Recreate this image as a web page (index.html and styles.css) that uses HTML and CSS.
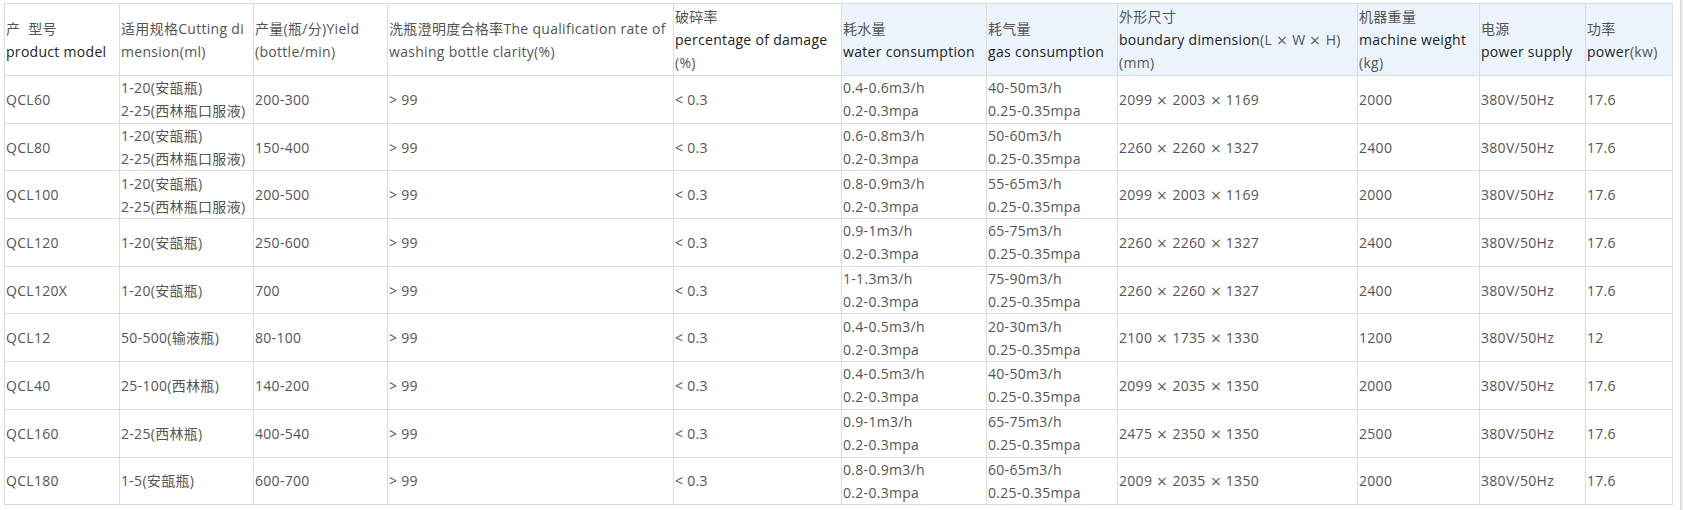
FILE: index.html
```html
<!DOCTYPE html>
<html lang="zh">
<head>
<meta charset="utf-8">
<title>QCL</title>
<link rel="stylesheet" href="styles.css">
</head>
<body>
<div class="page">
  <div class="content">
    <table class="spec">
      <colgroup>
        <col class="c1"><col class="c2"><col class="c3"><col class="c4"><col class="c5"><col class="c6"><col class="c7"><col class="c8"><col class="c9"><col class="c10"><col class="c11">
      </colgroup>
      <thead>
        <tr>
          <th>产&nbsp; 型号<br><span class="en">product model</span></th>
          <th>适用规格Cutting di<br>mension(ml)</th>
          <th>产量(瓶/分)Yield<br>(bottle/min)</th>
          <th>洗瓶澄明度合格率The qualification rate of<br>washing bottle clarity(%)</th>
          <th>破碎率<br><span class="en">percentage of damage</span><br>(%)</th>
          <th class="blue">耗水量<br><span class="en">water consumption</span></th>
          <th class="blue">耗气量<br><span class="en">gas consumption</span></th>
          <th class="blue">外形尺寸<br><span class="en">boundary dimension</span>(L <span class="x">×</span> W <span class="x">×</span> H)<br>(mm)</th>
          <th class="blue">机器重量<br><span class="en">machine weight</span><br>(kg)</th>
          <th class="blue">电源<br><span class="en">power supply</span></th>
          <th class="blue">功率<br><span class="en">power</span>(kw)</th>
        </tr>
      </thead>
      <tbody>
        <tr><td>QCL60</td><td>1-20(安瓿瓶)<br>2-25(西林瓶口服液)</td><td>200-300</td><td>&gt; 99</td><td>&lt; 0.3</td><td>0.4-0.6m3/h<br>0.2-0.3mpa</td><td>40-50m3/h<br>0.25-0.35mpa</td><td>2099 <span class="x">×</span> 2003 <span class="x">×</span> 1169</td><td>2000</td><td>380V/50Hz</td><td>17.6</td></tr>
        <tr><td>QCL80</td><td>1-20(安瓿瓶)<br>2-25(西林瓶口服液)</td><td>150-400</td><td>&gt; 99</td><td>&lt; 0.3</td><td>0.6-0.8m3/h<br>0.2-0.3mpa</td><td>50-60m3/h<br>0.25-0.35mpa</td><td>2260 <span class="x">×</span> 2260 <span class="x">×</span> 1327</td><td>2400</td><td>380V/50Hz</td><td>17.6</td></tr>
        <tr><td>QCL100</td><td>1-20(安瓿瓶)<br>2-25(西林瓶口服液)</td><td>200-500</td><td>&gt; 99</td><td>&lt; 0.3</td><td>0.8-0.9m3/h<br>0.2-0.3mpa</td><td>55-65m3/h<br>0.25-0.35mpa</td><td>2099 <span class="x">×</span> 2003 <span class="x">×</span> 1169</td><td>2000</td><td>380V/50Hz</td><td>17.6</td></tr>
        <tr><td>QCL120</td><td>1-20(安瓿瓶)</td><td>250-600</td><td>&gt; 99</td><td>&lt; 0.3</td><td>0.9-1m3/h<br>0.2-0.3mpa</td><td>65-75m3/h<br>0.25-0.35mpa</td><td>2260 <span class="x">×</span> 2260 <span class="x">×</span> 1327</td><td>2400</td><td>380V/50Hz</td><td>17.6</td></tr>
        <tr><td>QCL120X</td><td>1-20(安瓿瓶)</td><td>700</td><td>&gt; 99</td><td>&lt; 0.3</td><td>1-1.3m3/h<br>0.2-0.3mpa</td><td>75-90m3/h<br>0.25-0.35mpa</td><td>2260 <span class="x">×</span> 2260 <span class="x">×</span> 1327</td><td>2400</td><td>380V/50Hz</td><td>17.6</td></tr>
        <tr><td>QCL12</td><td>50-500(输液瓶)</td><td>80-100</td><td>&gt; 99</td><td>&lt; 0.3</td><td>0.4-0.5m3/h<br>0.2-0.3mpa</td><td>20-30m3/h<br>0.25-0.35mpa</td><td>2100 <span class="x">×</span> 1735 <span class="x">×</span> 1330</td><td>1200</td><td>380V/50Hz</td><td>12</td></tr>
        <tr><td>QCL40</td><td>25-100(西林瓶)</td><td>140-200</td><td>&gt; 99</td><td>&lt; 0.3</td><td>0.4-0.5m3/h<br>0.2-0.3mpa</td><td>40-50m3/h<br>0.25-0.35mpa</td><td>2099 <span class="x">×</span> 2035 <span class="x">×</span> 1350</td><td>2000</td><td>380V/50Hz</td><td>17.6</td></tr>
        <tr><td>QCL160</td><td>2-25(西林瓶)</td><td>400-540</td><td>&gt; 99</td><td>&lt; 0.3</td><td>0.9-1m3/h<br>0.2-0.3mpa</td><td>65-75m3/h<br>0.25-0.35mpa</td><td>2475 <span class="x">×</span> 2350 <span class="x">×</span> 1350</td><td>2500</td><td>380V/50Hz</td><td>17.6</td></tr>
        <tr><td>QCL180</td><td>1-5(安瓿瓶)</td><td>600-700</td><td>&gt; 99</td><td>&lt; 0.3</td><td>0.8-0.9m3/h<br>0.2-0.3mpa</td><td>60-65m3/h<br>0.25-0.35mpa</td><td>2009 <span class="x">×</span> 2035 <span class="x">×</span> 1350</td><td>2000</td><td>380V/50Hz</td><td>17.6</td></tr>
      </tbody>
    </table>
  </div>
  <div class="scrollstrip"></div>
</div>
</body>
</html>
```
FILE: styles.css
```css
html, body {
  margin: 0;
  padding: 0;
  background: #fff;
}
.page {
  display: flex;
  height: 510px;
  overflow: hidden;
}
.content {
  flex: 1;
  padding: 3px 0 0 4px;
}
.scrollstrip {
  width: 3px;
  background: #ececec;
  border-left: 1px solid #d6d6d6;
  box-sizing: border-box;
}
.spec {
  border-collapse: collapse;
  table-layout: fixed;
  width: 1668px;
  font-family: "Open Sans", "Noto Sans CJK SC", sans-serif;
  font-size: 14px;
  line-height: 23px;
  letter-spacing: 0.3px;
  color: #555;
}
.c1 { width: 115px; }
.c2 { width: 134px; }
.c3 { width: 134px; }
.c4 { width: 286px; }
.c5 { width: 168px; }
.c6 { width: 145px; }
.c7 { width: 131px; }
.c8 { width: 240px; }
.c9 { width: 122px; }
.c10 { width: 106px; }
.c11 { width: 87px; }
.spec th,
.spec td {
  border: 1px solid #dcdcdc;
  padding: 0 1px;
  text-align: left;
  vertical-align: middle;
  font-weight: normal;
  white-space: nowrap;
  overflow: hidden;
}
.spec thead tr {
  height: 72px;
}
.spec tbody tr {
  height: 47.7px;
}
.spec th.blue {
  background: #ebf3fb;
}
.en {
  color: #222;
}
.x {
  display: inline-block;
  padding: 0 2px;
  transform: scale(1.3);
  color: #666;
}
```
